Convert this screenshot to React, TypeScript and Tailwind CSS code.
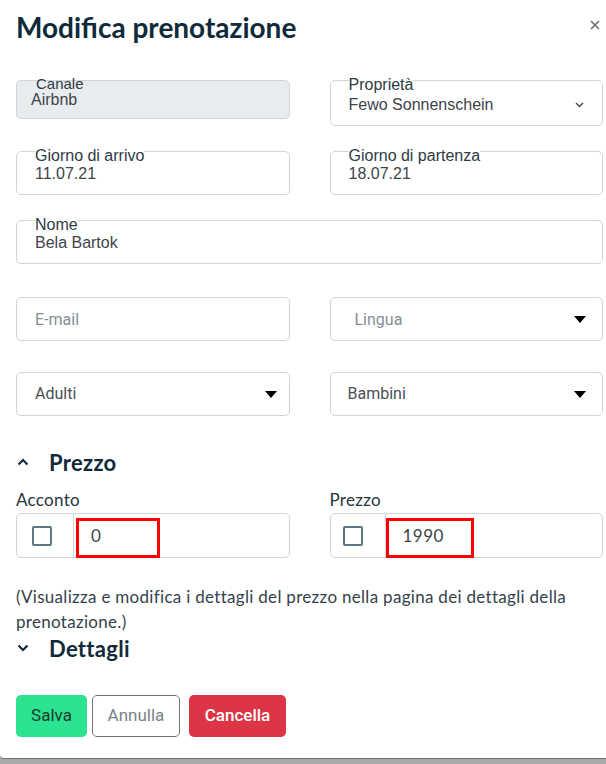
import React from "react";

const LS = "font-['Liberation_Sans',Arial,sans-serif]";
const LATO = "font-['Lato',sans-serif]";
const ROBOTO = "font-['Roboto',sans-serif]";

function Caret({ className = "" }: { className?: string }) {
  return (
    <svg width="12" height="7" viewBox="0 0 12 7" className={className}>
      <path d="M0 0 L12 0 L6 7 Z" fill="#000" />
    </svg>
  );
}

function Chevron({ up = false }: { up?: boolean }) {
  return (
    <svg width="12" height="8" viewBox="0 0 12 8" className="shrink-0">
      <path
        d={up ? "M1.5 6.5 L6 2 L10.5 6.5" : "M1.5 1.5 L6 6 L10.5 1.5"}
        fill="none"
        stroke="#14293a"
        strokeWidth="2.2"
      />
    </svg>
  );
}

function Legend({ label, children, pb }: { label: string; children: React.ReactNode; pb: string }) {
  return (
    <fieldset className={`min-w-0 border border-[#ced4da] rounded-[5px] pl-[18px] pr-[18px] ${pb}`}>
      <legend className={`pt-[10px] px-0 text-[16px] leading-[16px] text-[#2d3b44] ${LS}`}>{label}</legend>
      {children}
    </fieldset>
  );
}

function Checkbox() {
  return <div className="w-[20px] h-[20px] border-2 border-[#5c7784] rounded-[2px]" />;
}

export default function App() {
  return (
    <div className="w-[606px] h-[764px] bg-[#a9a9a9] overflow-hidden">
      <div className="h-[759px] bg-white border-b border-[#707070] rounded-bl-[4px] pl-4 pr-[3px] flex flex-col">
        {/* header */}
        <div className="pt-[9px] flex items-center justify-between">
          <h1 className={`text-[28px] leading-[36px] font-bold text-[#0f2a3a] ${LATO}`}>Modifica prenotazione</h1>
          <svg width="10" height="10" viewBox="0 0 10 10" className="mr-[3px] mt-[-4px]">
            <path d="M1 1 L9 9 M9 1 L1 9" stroke="#6b6b6b" strokeWidth="1.6" />
          </svg>
        </div>

        {/* row 1 */}
        <div className="mt-[22px] grid grid-cols-2 gap-x-[40px] items-start">
          <div className={`mt-[13px] h-[39px] bg-[#e9ecef] border border-[#ced4da] rounded-[5px] ${LS}`}>
            <div className="mt-[-4px] pl-[19px] text-[15px] leading-[14px] text-[#2d3b44]">Canale</div>
            <div className="pl-[14px] text-[16px] leading-[18px] text-[#3d4449]">Airbnb</div>
          </div>
          <Legend label="Proprietà" pb="pb-[10px]">
            <div className={`mt-[2px] flex items-center justify-between text-[16px] leading-[20px] text-[#3d4449] ${LS}`}>
              <span>Fewo Sonnenschein</span>
              <svg width="9" height="6" viewBox="0 0 9 6">
                <path d="M1 1 L4.5 4.5 L8 1" fill="none" stroke="#444" strokeWidth="1.4" />
              </svg>
            </div>
          </Legend>
        </div>

        {/* row 2 */}
        <div className="mt-[12px] grid grid-cols-2 gap-x-[40px] items-start">
          <Legend label="Giorno di arrivo" pb="pb-[10px]">
            <div className={`text-[16px] leading-[20px] text-[#3d4449] ${LS}`}>11.07.21</div>
          </Legend>
          <Legend label="Giorno di partenza" pb="pb-[10px]">
            <div className={`text-[16px] leading-[20px] text-[#3d4449] ${LS}`}>18.07.21</div>
          </Legend>
        </div>

        {/* row 3 */}
        <div className="mt-[12px]">
          <Legend label="Nome" pb="pb-[10px]">
            <div className={`text-[16px] leading-[20px] text-[#3d4449] ${LS}`}>Bela Bartok</div>
          </Legend>
        </div>

        {/* row 4 */}
        <div className={`mt-[33px] grid grid-cols-2 gap-x-[40px] ${ROBOTO}`}>
          <div className="h-[44px] border border-[#ced4da] rounded-[5px] pl-[18px] pt-[1px] flex items-center text-[16px] text-[#868e96]">
            E-mail
          </div>
          <div className="h-[44px] border border-[#ced4da] rounded-[5px] pl-[24px] pr-[16px] pt-[1px] flex items-center justify-between text-[16px] text-[#868e96]">
            <span>Lingua</span>
            <Caret />
          </div>
        </div>

        {/* row 5 */}
        <div className={`mt-[31px] grid grid-cols-2 gap-x-[40px] ${ROBOTO}`}>
          <div className="h-[44px] border border-[#ced4da] rounded-[5px] pl-[18px] pr-[12px] flex items-center justify-between text-[16px] text-[#495057]">
            <span>Adulti</span>
            <Caret />
          </div>
          <div className="h-[44px] border border-[#ced4da] rounded-[5px] pl-[17px] pr-[16px] flex items-center justify-between text-[16px] text-[#495057]">
            <span>Bambini</span>
            <Caret />
          </div>
        </div>

        {/* Prezzo heading */}
        <div className="mt-[32px] h-[28px] flex items-center gap-[20px] pl-[1px]">
          <Chevron up />
          <span className={`text-[22px] tracking-[0.3px] font-bold text-[#0f2a3a] ${LATO}`}>Prezzo</span>
        </div>

        {/* price inputs */}
        <div className={`mt-[12px] grid grid-cols-2 gap-x-[40px] ${LATO}`}>
          <div className="flex flex-col">
            <div className="h-[24px] leading-[24px] text-[17px] tracking-[0.3px] text-[#26343d]">Acconto</div>
            <div className="mt-[1px] h-[45px] border border-[#ced4da] rounded-[5px] flex">
              <div className="w-[57px] border-r border-[#ced4da] flex items-center pl-[15px]">
                <Checkbox />
              </div>
              <div className="relative flex-1 flex items-center pl-[17px] text-[17px] tracking-[0.5px] text-[#3d4449]">
                <span>0</span>
                <div className="absolute left-[2px] top-[4px] w-[84px] h-[40px] border-[3px] border-[#ff0000]" />
              </div>
            </div>
          </div>
          <div className="flex flex-col">
            <div className="h-[24px] leading-[24px] text-[17px] tracking-[0.3px] text-[#26343d]">Prezzo</div>
            <div className="mt-[1px] h-[45px] border border-[#ced4da] rounded-[5px] flex">
              <div className="w-[55px] border-r border-[#ced4da] flex items-center pl-[12px]">
                <Checkbox />
              </div>
              <div className="relative flex-1 flex items-center pl-[17px] text-[17px] tracking-[0.5px] text-[#3d4449]">
                <span>1990</span>
                <div className="absolute left-[0px] top-[4px] w-[88px] h-[40px] border-[3px] border-[#ff0000]" />
              </div>
            </div>
          </div>
        </div>

        {/* paragraph */}
        <p className={`mt-[26px] text-[17px] tracking-[0.3px] leading-[25px] text-[#34424b] pr-[20px] ${LATO}`}>
          (Visualizza e modifica i dettagli del prezzo nella pagina dei dettagli della prenotazione.)
        </p>

        {/* Dettagli heading */}
        <div className="h-[28px] flex items-center gap-[20px] pl-[1px]">
          <Chevron />
          <span className={`text-[22px] tracking-[0.3px] font-bold text-[#0f2a3a] ${LATO}`}>Dettagli</span>
        </div>

        {/* buttons */}
        <div className={`mt-[33px] flex items-center ${ROBOTO}`}>
          <button className="h-[42px] w-[71px] rounded-[5px] bg-[#2ae28f] text-[17px] text-[#1d3a30]">Salva</button>
          <button className="ml-[5px] h-[42px] w-[88px] rounded-[5px] border border-[#6c757d] bg-white text-[17px] text-[#7a8288]">
            Annulla
          </button>
          <button className="ml-[9px] h-[42px] w-[97px] rounded-[5px] bg-[#dc3545] text-[17px] font-medium text-white">
            Cancella
          </button>
        </div>
      </div>
    </div>
  );
}
